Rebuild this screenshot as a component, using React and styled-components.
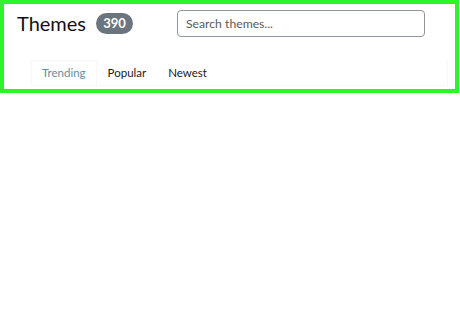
import styled, { createGlobalStyle } from "styled-components";

const GlobalStyle = createGlobalStyle`
  body {
    margin: 0;
    background: #ffffff;
    font-family: Lato, "Open Sans", sans-serif;
    color: #212529;
  }
`;

const Frame = styled.div`
  box-sizing: border-box;
  width: 459px;
  height: 93px;
  border: 4px solid #2cf52c;
  padding: 5px 0 0 13px;
  display: flex;
  flex-direction: column;
`;

const Header = styled.div`
  display: flex;
  align-items: center;
  height: 28px;
`;

const Title = styled.h1`
  margin: 0;
  font-size: 20px;
  font-weight: 400;
  line-height: 26px;
  color: #111;
`;

const Badge = styled.span`
  display: inline-flex;
  align-items: center;
  justify-content: center;
  width: 37px;
  height: 21px;
  margin-left: 10px;
  border-radius: 11px;
  background: #6c757d;
  color: #fff;
  font-size: 13px;
  font-weight: 700;
`;

const Search = styled.input`
  box-sizing: border-box;
  width: 248px;
  height: 27px;
  margin-left: 44px;
  padding: 0 8px;
  border: 1px solid #8f959b;
  border-radius: 4px;
  font-family: Lato, "Open Sans", sans-serif;
  font-size: 12.2px;
  color: #333;
  outline: none;
  &::placeholder {
    color: #5a5a5a;
  }
`;

const Tabs = styled.nav`
  display: flex;
  margin-top: 23px;
  margin-left: 14px;
  margin-right: 7px;
  border-bottom: 1px solid #f7f7f7;
  border-right: 1px solid #f7f7f7;
`;

const Tab = styled.a`
  padding: 0 10px;
  height: 24px;
  line-height: 24px;
  font-size: 11.5px;
  color: ${(p) => (p.$active ? "#5b8f9c" : "#1a1a1a")};
  border: 1px solid ${(p) => (p.$active ? "#f7f7f7" : "transparent")};
  border-bottom: none;
  cursor: pointer;
`;

export default function App() {
  return (
    <>
      <GlobalStyle />
      <Frame>
        <Header>
          <Title>Themes</Title>
          <Badge>390</Badge>
          <Search placeholder="Search themes..." />
        </Header>
        <Tabs>
          <Tab $active>Trending</Tab>
          <Tab>Popular</Tab>
          <Tab>Newest</Tab>
        </Tabs>
      </Frame>
    </>
  );
}
